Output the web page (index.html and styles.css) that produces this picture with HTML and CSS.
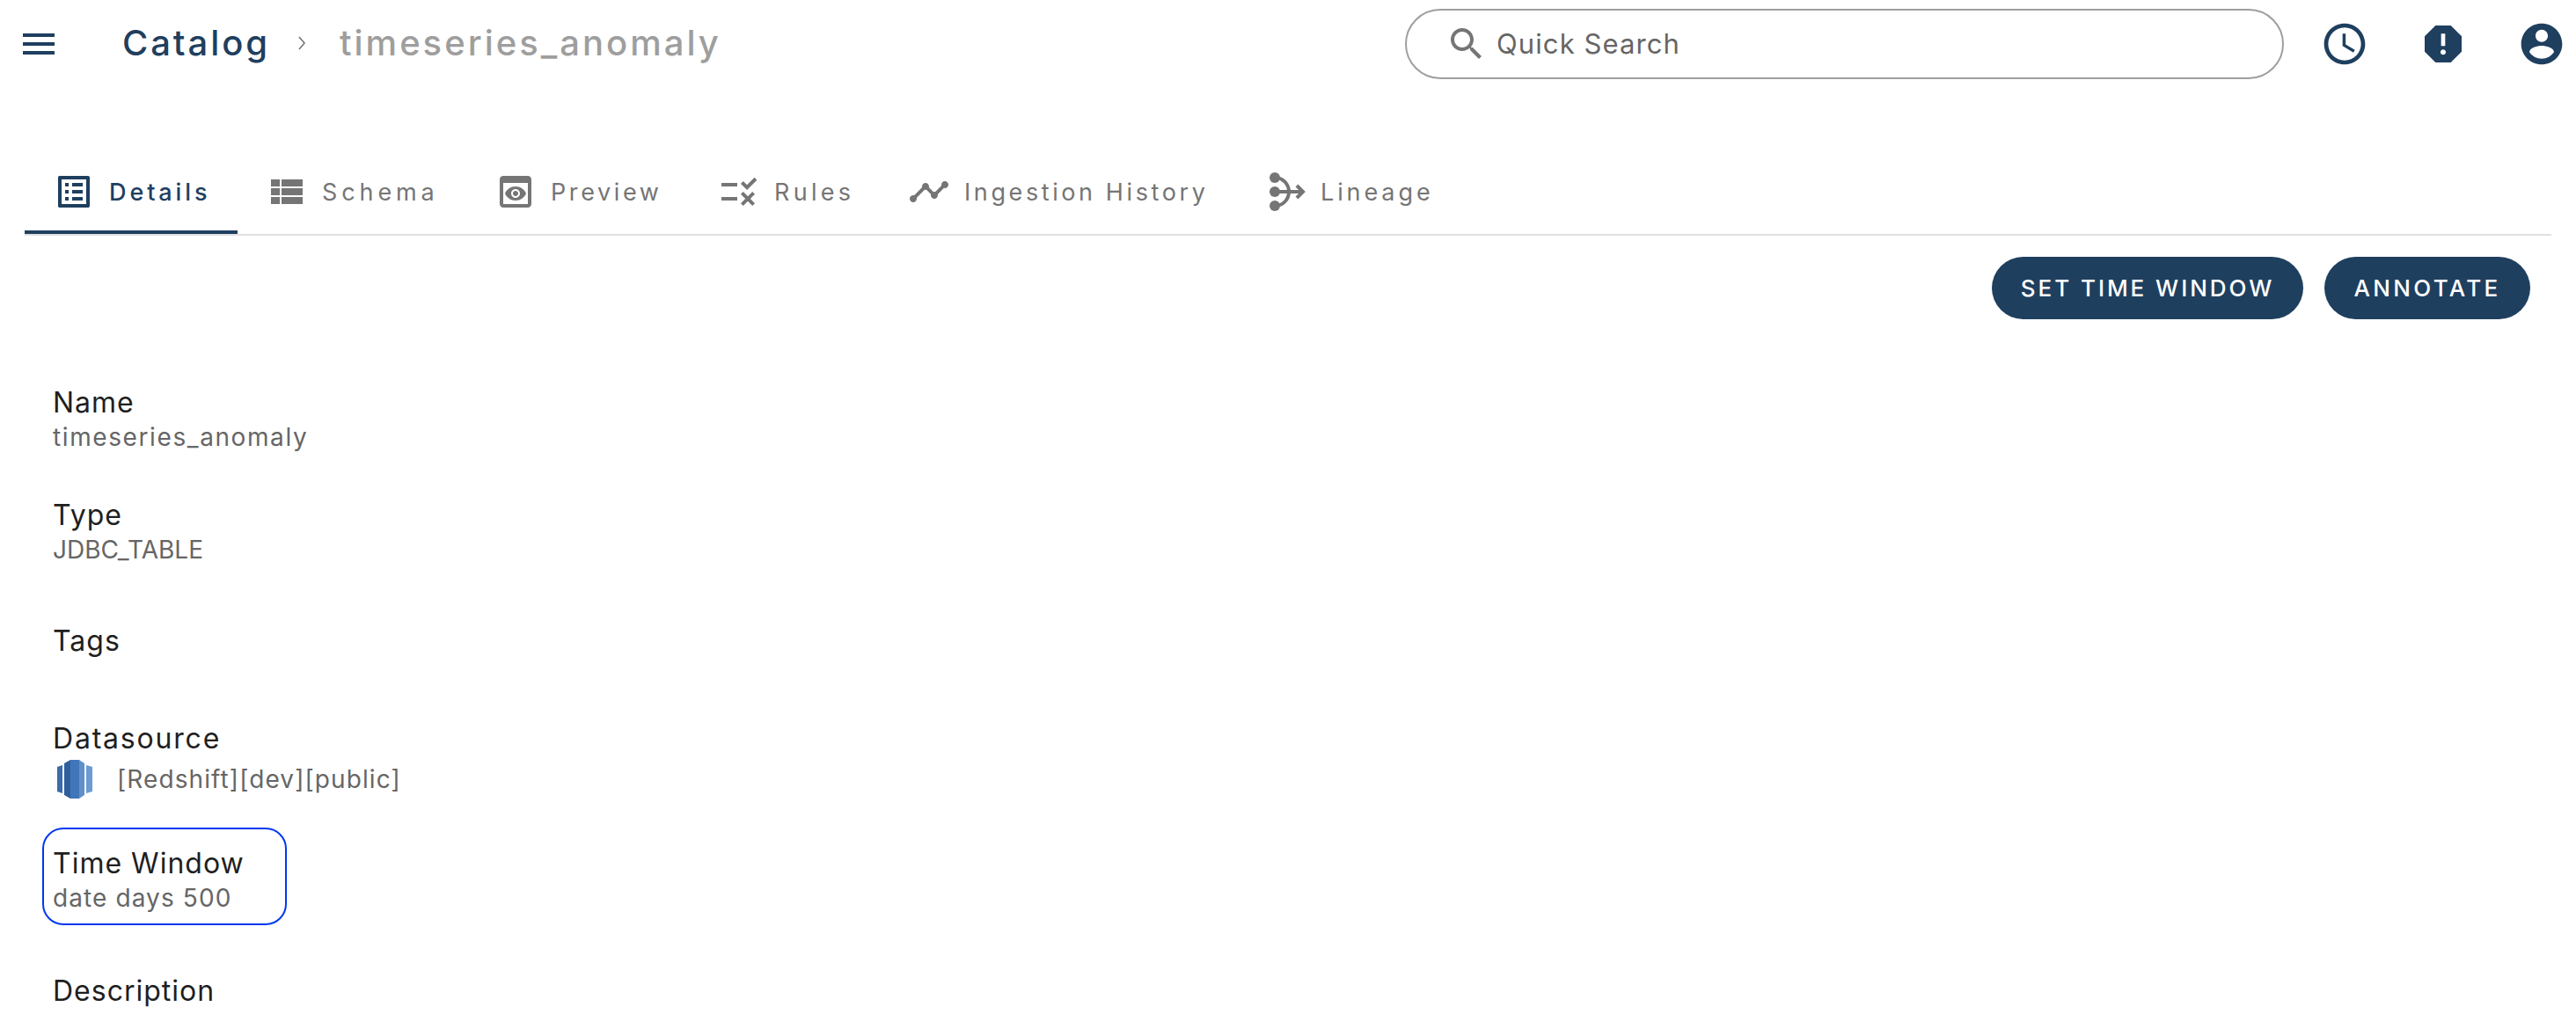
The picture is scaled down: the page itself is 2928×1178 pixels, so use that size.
FILE: index.html
```html
<!DOCTYPE html>
<html lang="en">
<head>
    <meta charset="UTF-8">
    <title>Catalog - timeseries_anomaly</title>
    <link rel="stylesheet" href="styles.css">
</head>
<body>
    <header class="topbar">
        <svg class="icon icon-navy" viewBox="0 0 24 24"><path d="M3 18h18v-2H3v2zm0-5h18v-2H3v2zm0-7v2h18V6H3z"/></svg>
        <nav class="crumbs">
            <span class="crumb-root">Catalog</span>
            <svg class="crumb-sep" viewBox="0 0 12 18"><polyline points="3,2 9,9 3,16"/></svg>
            <span class="crumb-leaf">timeseries_anomaly</span>
        </nav>
        <div class="search">
            <svg class="icon icon-grey" viewBox="0 0 24 24"><path d="M15.5 14h-.79l-.28-.27C15.41 12.59 16 11.11 16 9.5 16 5.91 13.09 3 9.5 3S3 5.91 3 9.5 5.91 16 9.5 16c1.61 0 3.09-.59 4.23-1.57l.27.28v.79l5 4.99L20.49 19l-4.99-5zm-6 0C7.01 14 5 11.99 5 9.5S7.01 5 9.5 5 14 7.01 14 9.5 11.99 14 9.5 14z"/></svg>
            <span class="search-text">Quick Search</span>
        </div>
        <div class="top-icons">
            <svg class="icon-lg" viewBox="0 0 24 24"><path d="M11.99 2C6.47 2 2 6.48 2 12s4.47 10 9.99 10C17.52 22 22 17.52 22 12S17.52 2 11.99 2zM12 20c-4.42 0-8-3.58-8-8s3.58-8 8-8 8 3.58 8 8-3.58 8-8 8z"/><path d="M12.5 7H11v6l5.25 3.15.75-1.23-4.5-2.67z"/></svg>
            <svg class="icon-lg" viewBox="0 0 24 24"><path d="M15.73 3H8.27L3 8.27v7.46L8.27 21h7.46L21 15.73V8.27L15.73 3zM12 17.3c-.72 0-1.3-.58-1.3-1.3 0-.72.58-1.3 1.3-1.3.72 0 1.3.58 1.3 1.3 0 .72-.58 1.3-1.3 1.3zm1-4.3h-2V7h2v6z"/></svg>
            <svg class="icon-lg" viewBox="0 0 24 24"><path d="M12 2C6.48 2 2 6.48 2 12s4.48 10 10 10 10-4.48 10-10S17.52 2 12 2zm0 3c1.66 0 3 1.34 3 3s-1.34 3-3 3-3-1.34-3-3 1.34-3 3-3zm0 14.2c-2.5 0-4.71-1.28-6-3.22.03-1.99 4-3.08 6-3.08 1.99 0 5.97 1.09 6 3.08-1.29 1.94-3.5 3.22-6 3.22z"/></svg>
        </div>
    </header>

    <div class="tabs">
        <div class="tab active">
            <svg class="icon" viewBox="0 0 24 24"><path d="M19 5v14H5V5h14m1.1-2H3.9c-.5 0-.9.4-.9.9v16.2c0 .4.4.9.9.9h16.2c.4 0 .9-.5.9-.9V3.9c0-.5-.5-.9-.9-.9zM11 7h6v2h-6V7zm0 4h6v2h-6v-2zm0 4h6v2h-6zM7 7h2v2H7zm0 4h2v2H7zm0 4h2v2H7z"/></svg>
            <span class="tab-label label-details">Details</span>
        </div>
        <div class="tab">
            <svg class="icon" viewBox="0 0 24 24"><path d="M3 14h5v-4H3v4zm0 5h5v-4H3v4zM3 9h5V5H3v4zm6 5h12v-4H9v4zm0 5h12v-4H9v4zM9 5v4h12V5H9z"/></svg>
            <span class="tab-label label-schema">Schema</span>
        </div>
        <div class="tab">
            <svg class="icon" viewBox="0 0 24 24"><path d="M19 3H5c-1.11 0-2 .9-2 2v14c0 1.1.89 2 2 2h14c1.1 0 2-.9 2-2V5c0-1.1-.89-2-2-2zm0 16H5V7h14v12zm-5.5-6c0 .83-.67 1.5-1.5 1.5s-1.5-.67-1.5-1.5.67-1.5 1.5-1.5 1.5.67 1.5 1.5zM12 9c-2.73 0-5.06 1.66-6 4 .94 2.34 3.27 4 6 4s5.06-1.66 6-4c-.94-2.34-3.27-4-6-4zm0 6.5c-1.38 0-2.5-1.12-2.5-2.5s1.12-2.5 2.5-2.5 2.5 1.12 2.5 2.5-1.12 2.5-2.5 2.5z"/></svg>
            <span class="tab-label label-preview">Preview</span>
        </div>
        <div class="tab">
            <svg class="icon" viewBox="0 0 24 24"><path d="M16.54 11L13 7.46l1.41-1.41 2.12 2.12 4.24-4.24 1.41 1.41L16.54 11zM11 7H2v2h9V7zm10 6.41L19.59 12 17 14.59 14.41 12 13 13.41 15.59 16 13 18.59 14.41 20 17 17.41 19.59 20 21 18.59 18.41 16 21 13.41zM11 15H2v2h9v-2z"/></svg>
            <span class="tab-label label-rules">Rules</span>
        </div>
        <div class="tab">
            <svg class="icon" viewBox="0 0 24 24"><path d="M23 8c0 1.1-.9 2-2 2-.18 0-.35-.02-.51-.07l-3.56 3.55c.05.16.07.34.07.52 0 1.1-.9 2-2 2s-2-.9-2-2c0-.18.02-.36.07-.52l-2.55-2.55c-.16.05-.34.07-.52.07s-.36-.02-.52-.07l-4.55 4.56c.05.16.07.33.07.51 0 1.1-.9 2-2 2s-2-.9-2-2 .9-2 2-2c.18 0 .35.02.51.07l4.56-4.55C8.02 9.36 8 9.18 8 9c0-1.1.9-2 2-2s2 .9 2 2c0 .18-.02.36-.07.52l2.55 2.55c.16-.05.34-.07.52-.07s.36.02.52.07l3.55-3.56C19.02 8.35 19 8.18 19 8c0-1.1.9-2 2-2s2 .9 2 2z"/></svg>
            <span class="tab-label label-history">Ingestion History</span>
        </div>
        <div class="tab">
            <svg class="icon lineage" viewBox="0 0 24 24">
                <circle cx="5" cy="4" r="3"/><circle cx="5" cy="12" r="3"/><circle cx="5" cy="20" r="3"/>
                <path d="M5 4c5 0 8 4 8 8s-3 8-8 8M5 12h16M17.500 8.500 21 12l-3.500 3.500"/>
            </svg>
            <span class="tab-label label-lineage">Lineage</span>
        </div>
    </div>

    <div class="actions">
        <button class="pill pill-wide">SET TIME WINDOW</button>
        <button class="pill pill-short">ANNOTATE</button>
    </div>

    <main class="details">
        <div class="field field-name">
            <div class="label">Name</div>
            <div class="value value-name">timeseries_anomaly</div>
        </div>
        <div class="field field-type">
            <div class="label">Type</div>
            <div class="value value-type">JDBC_TABLE</div>
        </div>
        <div class="field field-tags">
            <div class="label">Tags</div>
        </div>
        <div class="field field-source">
            <div class="label label-source">Datasource</div>
            <div class="value source-row">
                <svg class="redshift" viewBox="0 0 40 44">
                    <path fill="#3b6ba8" d="M0 8l6-2v32l-6-2a1 1 0 0 1-0-1V9z"/>
                    <path fill="#2e5f9a" d="M8 4l7-4v44l-7-4z"/>
                    <path fill="#4176ba" d="M15 0h10v44H15z"/>
                    <path fill="#5f90c9" d="M25 0l6 4v36l-6 4z"/>
                    <path fill="#6d9bd3" d="M33 6l7 2v28l-7 2z"/>
                </svg>
                <span>[Redshift][dev][public]</span>
            </div>
        </div>
        <div class="field field-window">
            <div class="label">Time Window</div>
            <div class="value">date days 500</div>
        </div>
        <div class="field">
            <div class="label">Description</div>
        </div>
    </main>
</body>
</html>
```

FILE: styles.css
```css
html, body { height: 1178px; overflow: hidden; }
body { margin: 0; background: #fff; font-family: Inter, "Noto Sans", sans-serif; color: #1f1f1f; }

.icon { width: 48px; height: 48px; flex: none; fill: currentColor; }
.icon-navy { color: #1f3f5f; }
.icon-grey { color: #757575; }
.icon-lg { width: 56px; height: 56px; flex: none; fill: #1f3f5f; }

.topbar { display: flex; align-items: center; height: 100px; padding: 0 11px 0 20px; box-sizing: border-box; }
.crumbs { display: flex; align-items: center; margin: -3px 0 0 71px; font-size: 40px; letter-spacing: 2.900px; white-space: nowrap; }
.crumb-root { color: #1f3f5f; font-weight: 500; }
.crumb-sep { width: 12px; height: 18px; margin: 0 37px 0 30px; fill: none; stroke: #777; stroke-width: 1.6; }
.crumb-leaf { color: #9e9e9e; font-weight: 500; letter-spacing: 3px; }

.search { display: flex; align-items: center; gap: 10px; width: 999px; height: 80px; margin-left: auto; padding-left: 44px; box-sizing: border-box; border: 2px solid #9e9e9e; border-radius: 40px; }
.search-text { margin-top: -2px; font-size: 31px; letter-spacing: 1.100px; color: #666; }
.top-icons { display: flex; gap: 56px; margin-left: 41px; }

.tabs { display: flex; margin: 0 28px; padding-top: 70px; border-bottom: 2px solid #e0e0e0; }
.tab { display: flex; align-items: center; gap: 16px; height: 96px; padding: 4px 32px 0; box-sizing: border-box; border-bottom: 4px solid transparent; color: #757575; font-size: 27px; letter-spacing: 3.900px; white-space: nowrap; }
.tab.active { color: #1f3f5f; border-bottom-color: #1f3f5f; font-weight: 500; }
.lineage path { fill: none; stroke: currentColor; stroke-width: 2; }

.label-details { width: 114px; }
.label-schema { width: 132px; letter-spacing: 4.900px; }
.label-preview { width: 126px; letter-spacing: 3.600px; }
.label-rules { width: 88px; letter-spacing: 4.300px; }
.label-history { width: 279px; letter-spacing: 3.600px; }
.label-lineage { width: 125px; margin-left: -2px; }

.actions { display: flex; justify-content: flex-end; gap: 24px; margin-top: 24px; padding-right: 52px; }
.pill { height: 71px; padding: 0; border: none; border-radius: 36px; background: #1f3f5f; color: #fff; font-family: inherit; font-size: 26px; font-weight: 500; }
.pill-wide { width: 354px; letter-spacing: 2.950px; }
.pill-short { width: 234px; letter-spacing: 3.300px; }

.details { padding: 73px 0 0 60px; }
.label { font-size: 32px; line-height: 44px; letter-spacing: 1px; }
.label-source { letter-spacing: 1.800px; }
.value { margin-top: -2px; font-size: 28px; line-height: 38px; letter-spacing: 1.100px; color: #666; }
.value-name { letter-spacing: 1.600px; }
.value-type { letter-spacing: 0; }
.field-name { margin-bottom: 48px; }
.field-type { margin-bottom: 63px; }
.field-tags { margin-bottom: 67px; }
.field-source { margin-bottom: 31px; }
.source-row { display: flex; align-items: center; gap: 28px; height: 48px; margin-top: 0; }
.redshift { width: 40px; height: 44px; margin-left: 5px; flex: none; }
.field-window { width: 258px; margin: 0 0 53px -12px; padding: 17px 6px 10px 10px; border: 2px solid #0038f0; border-radius: 24px; }
```
